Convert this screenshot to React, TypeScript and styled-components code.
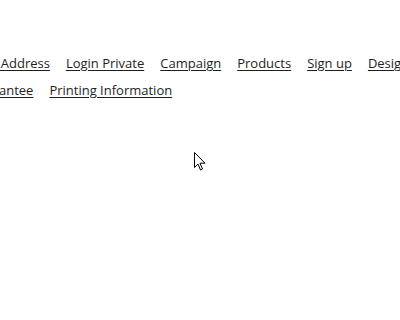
import React from "react";
import styled, { createGlobalStyle } from "styled-components";

const GlobalStyle = createGlobalStyle`
  html, body {
    margin: 0;
    padding: 0;
    background: #ffffff;
    overflow: hidden;
  }
`;

const Page = styled.div`
  position: relative;
  width: 400px;
  height: 320px;
  overflow: hidden;
  background: #ffffff;
`;

const LinkList = styled.ul`
  list-style: none;
  margin: 0 0 0 -31px;
  padding: 54px 0 0;
  width: 480px;
  display: flex;
  flex-wrap: wrap;
  column-gap: 16px;
  row-gap: 9px;
  font-family: "Open Sans", Arial, sans-serif;
  font-size: 13px;
  line-height: 18px;
`;

const LinkItem = styled.li`
  white-space: nowrap;
`;

const FooterLink = styled.a`
  color: #1e1e1e;
  text-decoration: underline;
  text-underline-offset: 2px;
`;

const Cursor = styled.svg`
  position: absolute;
  left: 193px;
  top: 151px;
`;

const links = [
  "Your Address",
  "Login Private",
  "Campaign",
  "Products",
  "Sign up",
  "Design",
  "Guarantee",
  "Printing Information",
];

export default function App() {
  return (
    <Page>
      <GlobalStyle />
      <LinkList>
        {links.map((l) => (
          <LinkItem key={l}>
            <FooterLink href="#">{l}</FooterLink>
          </LinkItem>
        ))}
      </LinkList>
      <Cursor width="14" height="22" viewBox="0 0 14 22">
        <path
          d="M1.5 1.5 L1.5 16.5 L5 13 L7.5 19 L9.5 18 L7 12.2 L12 12.2 Z"
          fill="#fff"
          stroke="#000"
          strokeWidth="1"
          strokeLinejoin="miter"
        />
      </Cursor>
    </Page>
  );
}
